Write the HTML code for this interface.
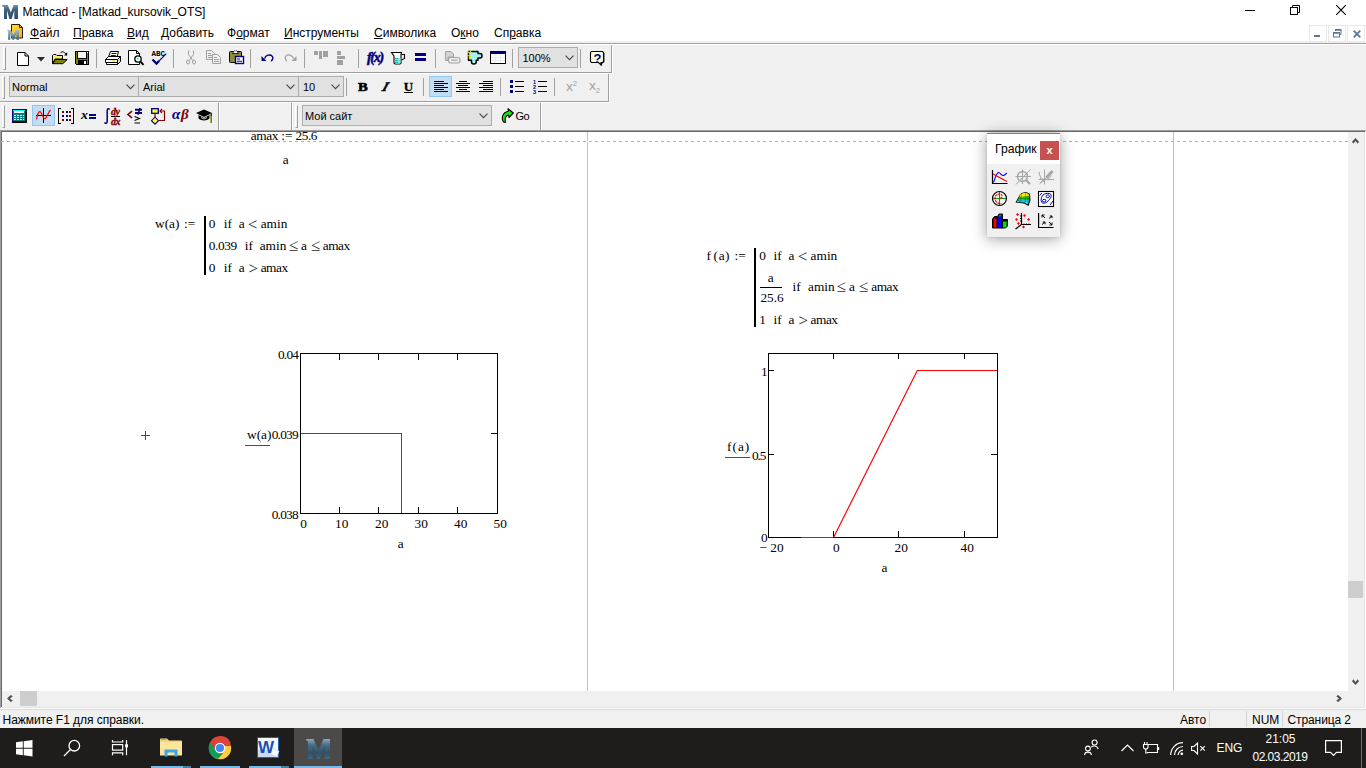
<!DOCTYPE html>
<html lang="ru">
<head>
<meta charset="utf-8">
<title>Mathcad - [Matkad_kursovik_OTS]</title>
<style>
*{box-sizing:border-box;margin:0;padding:0}
html,body{width:1366px;height:768px;overflow:hidden;background:#fff}
body{position:relative;font-family:"Liberation Sans",sans-serif;font-size:12px;color:#000}
.a{position:absolute}
.t{position:absolute;white-space:pre;line-height:1}
.ui{font-family:"Liberation Sans",sans-serif;font-size:12px}
.m{font-family:"Liberation Serif",serif;font-size:13.33px}
u{text-decoration:underline;text-underline-offset:1px}
svg{position:absolute;overflow:visible}
.combo{position:absolute;height:21px;background:#e1e1e1;border:1px solid #adadad}
.grip{position:absolute;width:3px;height:23px;border-left:1px solid #fff;border-top:1px solid #fff;border-right:1px solid #a0a0a0;border-bottom:1px solid #a0a0a0}
.sep{position:absolute;width:1px;height:19px;background:#a0a0a0}
.hl{position:absolute;background:#c2dcf3;border:1px solid #92c6f3}
.ui.c{font-size:11px}
.m.op{font-size:17px;color:#2a2a2a}
.red{background:#f00}
.blk{background:#000}
</style>
</head>
<body>
<!-- ===== TITLE BAR ===== -->
<div class="a" style="left:0;top:0;width:1366px;height:43px;background:#fff"></div>
<svg style="left:2px;top:5px" width="16" height="14" viewBox="0 0 16 14">
 <defs><linearGradient id="mg" x1="0" y1="0" x2="0" y2="1"><stop offset="0" stop-color="#7394aa"/><stop offset="0.350" stop-color="#3d6078"/><stop offset="1" stop-color="#2f5068"/></linearGradient></defs>
 <path d="M0 0H5.800L8.800 7.500L11.600 0H16V14H12.300V5.200L9.700 14H7.400L5 5.600V14H2V2.300L0 0.900Z" fill="url(#mg)"/>
</svg>
<div class="t ui" style="left:22.500px;top:6px;letter-spacing:-0.060px">Mathcad - [Matkad_kursovik_OTS]</div>
<!-- window controls -->
<div class="a blk" style="left:1245px;top:10px;width:10px;height:1px"></div>
<svg style="left:1290px;top:5px" width="10" height="10" viewBox="0 0 10 10" fill="none" stroke="#000" stroke-width="1"><path d="M2.500 2.500V0.500H9.500V7.500H7.500"/><rect x="0.500" y="2.500" width="7" height="7"/></svg>
<svg style="left:1336px;top:5px" width="10" height="10" viewBox="0 0 10 10" fill="none" stroke="#000" stroke-width="1.100"><path d="M0.200 0.200L9.800 9.800M9.800 0.200L0.200 9.800"/></svg>

<!-- ===== MENU BAR ===== -->
<svg style="left:7px;top:24px" width="16" height="16" viewBox="0 0 16 16">
 <defs><linearGradient id="yg" x1="0" y1="0" x2="1" y2="1"><stop offset="0" stop-color="#ffe040"/><stop offset="1" stop-color="#ffae00"/></linearGradient><linearGradient id="mg3" x1="0" y1="0" x2="0" y2="1"><stop offset="0" stop-color="#a9c0cf"/><stop offset="0.500" stop-color="#6f91a7"/><stop offset="1" stop-color="#3f6178"/></linearGradient></defs>
 <path d="M4.500 0.500H12.500L15.500 3.500V14H4.500Z" fill="url(#yg)" stroke="#2a1c00" stroke-width="1"/>
 <path d="M12.500 0.500V3.500H15.500" fill="none" stroke="#2a1c00" stroke-width="1"/>
 <path d="M0 6H3.800L6.300 11L8.700 6H12V15.700H9.400V9.200L7 15.700H5.400L3.300 9.500V15.700H1.200V7.500L0 6.500Z" fill="url(#mg3)"/>
</svg>
<div class="t ui" style="left:30px;top:27px"><u>Ф</u>айл</div>
<div class="t ui" style="left:73px;top:27px"><u>П</u>равка</div>
<div class="t ui" style="left:127px;top:27px"><u>В</u>ид</div>
<div class="t ui" style="left:161px;top:27px"><u>Д</u>обавить</div>
<div class="t ui" style="left:227px;top:27px">Ф<u>о</u>рмат</div>
<div class="t ui" style="left:284px;top:27px"><u>И</u>нструменты</div>
<div class="t ui" style="left:374px;top:27px"><u>С</u>имволика</div>
<div class="t ui" style="left:451px;top:27px">О<u>к</u>но</div>
<div class="t ui" style="left:494px;top:27px">Сп<u>р</u>авка</div>
<!-- MDI child buttons -->
<div class="a" style="left:1309px;top:25px;width:18px;height:17px;border:1px solid #e8e8e8"></div>
<div class="a" style="left:1328px;top:25px;width:18px;height:17px;border:1px solid #e8e8e8"></div>
<div class="a" style="left:1347px;top:25px;width:18px;height:17px;border:1px solid #e8e8e8"></div>
<div class="a" style="left:1314px;top:35px;width:6px;height:2px;background:#5f7693"></div>
<svg style="left:1333px;top:29px" width="9" height="9" viewBox="0 0 9 9" fill="none" stroke="#5f7693"><path d="M2.500 2V1H8V5.500H6.500" stroke-width="1"/><path d="M2 0.750H8.500" stroke-width="1.500"/><rect x="0.500" y="4" width="6" height="4" stroke-width="1"/><path d="M0 3.750H7" stroke-width="1.500"/></svg>
<svg style="left:1353px;top:30px" width="8" height="8" viewBox="0 0 8 8" fill="none" stroke="#5f7693" stroke-width="1.800"><path d="M0.700 0.700L7.300 7.300M7.300 0.700L0.700 7.300"/></svg>
<!-- ===== TOOLBAR AREA ===== -->
<div class="a" style="left:0;top:42px;width:1366px;height:89px;background:#f0f0f0"></div>
<div class="a" style="left:0;top:41px;width:1308px;height:1px;background:#f0f0f0"></div>
<div class="a" style="left:0;top:43px;width:1366px;height:1px;background:#a0a0a0"></div>
<div class="a" style="left:0;top:44px;width:1366px;height:1px;background:#fff"></div>
<!-- toolbar 1 frame -->
<div class="a" style="left:0;top:72px;width:612px;height:1px;background:#a0a0a0"></div>
<div class="a" style="left:0;top:73px;width:613px;height:1px;background:#fff"></div>
<div class="a" style="left:611px;top:45px;width:1px;height:28px;background:#a0a0a0"></div>
<div class="a" style="left:612px;top:45px;width:1px;height:28px;background:#fff"></div>
<div class="grip" style="left:3px;top:47px"></div>
<div class="sep" style="left:96px;top:49px"></div>
<div class="sep" style="left:173px;top:49px"></div>
<div class="sep" style="left:250px;top:49px"></div>
<div class="sep" style="left:304px;top:49px"></div>
<div class="sep" style="left:358px;top:49px"></div>
<div class="sep" style="left:435px;top:49px"></div>
<div class="sep" style="left:512px;top:49px"></div>
<div class="sep" style="left:580px;top:49px"></div>
<!-- new -->
<svg style="left:17px;top:52px" width="12" height="14" viewBox="0 0 12 14"><path d="M0.500 0.500H8L11.500 4V13.500H0.500Z" fill="#fff" stroke="#000"/><path d="M8 0.500V4H11.500" fill="none" stroke="#000"/></svg>
<svg style="left:37px;top:57px" width="8" height="5" viewBox="0 0 8 5"><path d="M0 0H8L4 4.500Z" fill="#2b2b2b"/></svg>
<!-- open -->
<svg style="left:52px;top:51px" width="16" height="14" viewBox="0 0 16 14">
 <path d="M8.300 2.200C9.500 0.200 12 0.300 13.800 3" fill="none" stroke="#000" stroke-width="1"/><path d="M12 4.500H15.200V1.200Z" fill="#000"/>
 <path d="M0.500 12.500V4.500L1.500 3.500H4L5 4.500H10.500V8H3L0.500 12.500Z" fill="#f4f468" stroke="#000"/>
 <path d="M3.500 8.500H15.200L10.800 12.700H0.700Z" fill="#808000" stroke="#000"/>
</svg>
<!-- save -->
<svg style="left:75px;top:51px" width="15" height="15" viewBox="0 0 15 15" shape-rendering="crispEdges">
 <path d="M0 0H14V14H1L0 13Z" fill="#000"/><rect x="1" y="1" width="12" height="12" fill="#808000"/>
 <rect x="3" y="1" width="8" height="6" fill="#f4f4f4"/><rect x="2" y="0" width="1" height="8" fill="#000"/><rect x="11" y="0" width="1" height="8" fill="#000"/><rect x="2" y="7" width="10" height="1" fill="#000"/>
 <rect x="12" y="1" width="1" height="1" fill="#fff"/>
 <rect x="3" y="9" width="9" height="4" fill="#000"/><rect x="9" y="10" width="2" height="3" fill="#fff"/>
</svg>
<!-- print -->
<svg style="left:105px;top:51px" width="17" height="14" viewBox="0 0 17 14">
 <path d="M3.500 6L5.500 0.500H13.500L12 6" fill="#fff" stroke="#000"/>
 <path d="M6.500 2.500H11.500M5.800 4.500H10.800" stroke="#000" stroke-width="0.900"/>
 <path d="M0.500 8.500L3.500 5.500H15.500L12.500 8.500Z" fill="#fff" stroke="#000"/>
 <path d="M12.500 8.500L15.500 5.500V10.500L12.500 13.500Z" fill="#d8d8d8" stroke="#000"/>
 <path d="M0.500 8.500H12.500V11.500H0.500Z" fill="#fff" stroke="#000"/>
 <path d="M1.500 11.500H12.500V13.500H1.500Z" fill="#fff" stroke="#000"/>
 <path d="M7 10H10" stroke="#f0e000" stroke-width="1.200"/>
</svg>
<!-- preview -->
<svg style="left:128px;top:50px" width="17" height="16" viewBox="0 0 17 16">
 <path d="M0.500 0.500H8.500L11.500 3.500V14.500H0.500Z" fill="#fff" stroke="#000"/><path d="M8.500 0.500V3.500H11.500" fill="none" stroke="#000"/>
 <circle cx="10" cy="9" r="3.200" fill="#fff" stroke="#000" stroke-width="1.300"/><path d="M8.500 8.500L10.500 7.500V10.500Z" fill="#00e0e0"/>
 <path d="M12.300 11.300L15.500 14.800" stroke="#000" stroke-width="2"/>
</svg>
<!-- spell -->
<div class="t" style="left:151.500px;top:49.500px;font:bold 7.500px 'Liberation Mono',monospace;letter-spacing:0;color:#000">ABC</div>
<svg style="left:152px;top:53px" width="15" height="12" viewBox="0 0 15 12"><path d="M4.500 10.500L14.300 0.700" fill="none" stroke="#000080" stroke-width="1.100"/><path d="M0.500 6.500L4.500 10.500L7 8" fill="none" stroke="#000080" stroke-width="2.300"/></svg>
<!-- cut (disabled) -->
<svg style="left:186px;top:50px" width="10" height="15" viewBox="0 0 10 15" fill="none" stroke="#a0a0a0"><path d="M2.500 0.500V4.500L6.800 10.500M7.500 0.500V4.500L3.200 10.500" stroke-width="1"/><ellipse cx="2" cy="12" rx="1.500" ry="2"/><ellipse cx="8" cy="12" rx="1.500" ry="2"/></svg>
<!-- copy (disabled) -->
<svg style="left:206px;top:50px" width="16" height="14" viewBox="0 0 16 14" fill="#f0f0f0" stroke="#a0a0a0"><path d="M0.500 0.500H5.500L8.500 3.500V9.500H0.500Z"/><path d="M2 3.500H5M2 5.500H6M2 7.500H6"/><path d="M6.500 4.500H11.500L14.500 7.500V13.500H6.500Z"/><path d="M8 7.500H11M8 9.500H13M8 11.500H13"/></svg>
<!-- paste -->
<svg style="left:229px;top:50px" width="16" height="15" viewBox="0 0 16 15">
 <rect x="0.500" y="1.500" width="12" height="11" rx="1" fill="#8c8c3c" stroke="#000"/>
 <path d="M3.500 3.500H9.500L8 1H5Z" fill="#fff" stroke="#000" stroke-width="0.800"/><path d="M5.500 1.500L6.500 0.500L7.500 1.500Z" fill="#ff0" stroke="#ff0" stroke-width="0.600"/>
 <rect x="6.500" y="6.500" width="8" height="7" fill="#fff" stroke="#000080" stroke-width="1.400"/><path d="M8 9H11M8 11.300H13" stroke="#000080" stroke-width="1.100"/>
</svg>
<!-- undo / redo -->
<svg style="left:261px;top:54px" width="13" height="8" viewBox="0 0 13 8"><path d="M0.500 2V7H5.500Z" fill="#000080"/><path d="M3.500 4.500C5 1 9 0 11 2C12.500 3.500 12 6 10 7" fill="none" stroke="#000080" stroke-width="1.400"/></svg>
<svg style="left:284px;top:54px" width="13" height="8" viewBox="0 0 13 8"><path d="M12.500 2V7H7.500Z" fill="#a0a0a0"/><path d="M9.500 4.500C8 1 4 0 2 2C0.500 3.500 1 6 3 7" fill="none" stroke="#a0a0a0" stroke-width="1.200"/></svg>
<!-- align regions (disabled) -->
<svg style="left:314px;top:51px" width="15" height="9" viewBox="0 0 15 9" fill="#a0a0a0" shape-rendering="crispEdges"><rect x="0" y="0" width="4" height="4"/><rect x="5" y="0" width="3" height="8"/><rect x="9" y="0" width="5" height="6"/></svg>
<svg style="left:337px;top:51px" width="9" height="14" viewBox="0 0 9 14" fill="#a0a0a0" shape-rendering="crispEdges"><rect x="0" y="0" width="4" height="4"/><rect x="0" y="5" width="8" height="3"/><rect x="0" y="9" width="6" height="5"/></svg>
<!-- f(x) -->
<div class="t" style="left:367px;top:50px;font:italic bold 14px 'Liberation Serif',serif;letter-spacing:-1.300px;color:#000080;-webkit-text-stroke:0.500px #000080">f(x)</div>
<!-- units jug -->
<svg style="left:391px;top:52px" width="15" height="13" viewBox="0 0 15 13">
 <path d="M0.500 0.500H10.500L10 2.500V11L9 12H4L3 11V4Z" fill="#fff" stroke="#000" stroke-width="1.100"/>
 <path d="M10.500 2.500H13.500V6.500L10.500 8" fill="none" stroke="#000" stroke-width="1.100"/>
 <rect x="4" y="6" width="5.500" height="5.500" fill="#7fe8e8"/><path d="M4 6.500H7M4 8.500H7M4 10.500H7" stroke="#00a0a0" stroke-width="0.800"/>
</svg>
<!-- equals -->
<div class="a" style="left:415px;top:53px;width:11px;height:3px;background:#000080"></div>
<div class="a" style="left:415px;top:58px;width:11px;height:3px;background:#000080"></div>
<!-- hyperlink (disabled) -->
<svg style="left:445px;top:51px" width="16" height="13" viewBox="0 0 16 13" fill="none" stroke="#a0a0a0"><path d="M0.500 0.500H6L8.500 3V6H3V9.500H0.500Z" fill="#d4d4d4"/><rect x="3.500" y="6.500" width="11.500" height="5.500" rx="2.200" fill="#f0f0f0" stroke-width="1.100"/><rect x="6" y="8.300" width="6.500" height="1.800" fill="#b8b8b8" stroke="none"/></svg>
<!-- component puzzle -->
<svg style="left:467px;top:50px" width="16" height="15" viewBox="0 0 16 15">
 <path d="M1.500 1.500H11V3.500H13C15.700 3.500 15.700 8 13 8H11V10.200H9.200V12C9.200 14.600 4.500 14.600 4.500 12V10.200H1.500Z" fill="#a4f2f2" stroke="#000" stroke-width="1.500" stroke-linejoin="round"/>
 <path d="M0.500 1.500L3.500 4M0.800 5.500L4 6.500M3 0.500L4.800 3.500M1.500 8L4.500 7.800" stroke="#f8ec00" stroke-width="1.100"/>
</svg>
<!-- table -->
<svg style="left:490px;top:51px" width="17" height="14" viewBox="0 0 17 14" shape-rendering="crispEdges"><rect x="0.500" y="0.500" width="15" height="12" fill="#fff" stroke="#000"/><rect x="1" y="1" width="14" height="2" fill="#000080"/><rect x="0" y="12" width="16" height="1" fill="#000"/><path d="M1 6.500H15M1 9.500H15M5.500 3V12M10.500 3V12" stroke="#ececec"/></svg>
<!-- zoom combo -->
<div class="combo" style="left:518px;top:47px;width:60px"></div>
<div class="t ui c" style="left:522.500px;top:53px">100%</div>
<svg style="left:565px;top:55px" width="9" height="6" viewBox="0 0 9 6"><path d="M0.500 0.700L4.500 4.700L8.500 0.700" fill="none" stroke="#444" stroke-width="1.100"/></svg>
<!-- help -->
<svg style="left:590px;top:51px" width="15" height="15" viewBox="0 0 15 15"><path d="M1.500 0.500H12.500L13.500 1.500V10.500L12.500 11.500H11V14L8.500 11.500H1.500L0.500 10.500V1.500Z" fill="#fffde0" stroke="#000" stroke-width="1.100"/><path d="M13.900 2V11L12.700 12H11.500V14.500" fill="none" stroke="#000" stroke-width="1"/></svg>
<div class="t" style="left:593.500px;top:51px;font:bold 13px 'Liberation Sans',sans-serif;color:#000080">?</div>
<!-- ===== TOOLBAR 2 (formatting) ===== -->
<div class="a" style="left:0;top:101px;width:609px;height:1px;background:#a0a0a0"></div>
<div class="a" style="left:0;top:102px;width:610px;height:1px;background:#fff"></div>
<div class="a" style="left:608px;top:74px;width:1px;height:28px;background:#a0a0a0"></div>
<div class="a" style="left:609px;top:74px;width:1px;height:28px;background:#fff"></div>
<div class="grip" style="left:2px;top:76px"></div>
<div class="combo" style="left:9px;top:76px;width:130px"></div>
<div class="combo" style="left:138px;top:76px;width:162px"></div>
<div class="combo" style="left:298px;top:76px;width:46px"></div>
<div class="t ui c" style="left:12px;top:82px">Normal</div>
<div class="t ui c" style="left:143px;top:82px">Arial</div>
<div class="t ui c" style="left:303px;top:82px">10</div>
<svg style="left:126px;top:84px" width="9" height="6" viewBox="0 0 9 6"><path d="M0.500 0.700L4.500 4.700L8.500 0.700" fill="none" stroke="#444" stroke-width="1.100"/></svg>
<svg style="left:286px;top:84px" width="9" height="6" viewBox="0 0 9 6"><path d="M0.500 0.700L4.500 4.700L8.500 0.700" fill="none" stroke="#444" stroke-width="1.100"/></svg>
<svg style="left:331px;top:84px" width="9" height="6" viewBox="0 0 9 6"><path d="M0.500 0.700L4.500 4.700L8.500 0.700" fill="none" stroke="#444" stroke-width="1.100"/></svg>
<div class="sep" style="left:346px;top:78px;height:18px"></div>
<div class="sep" style="left:423px;top:78px;height:18px"></div>
<div class="sep" style="left:500px;top:78px;height:18px"></div>
<div class="sep" style="left:554px;top:78px;height:18px"></div>
<div class="t" style="left:357.500px;top:79px;font:bold 13px 'Liberation Serif',serif;-webkit-text-stroke:0.600px #000;transform:scaleX(1.120);transform-origin:left">B</div>
<div class="t" style="left:383px;top:79px;font:italic bold 13px 'Liberation Serif',serif;-webkit-text-stroke:0.500px #000;transform:skewX(-20deg)">I</div>
<div class="t" style="left:403.800px;top:79px;font:bold 13px 'Liberation Serif',serif;-webkit-text-stroke:0.300px #000">U</div>
<div class="a blk" style="left:404px;top:92px;width:9px;height:1px"></div>
<div class="hl" style="left:429px;top:76px;width:23px;height:21px"></div>
<svg style="left:434px;top:81px" width="15" height="11" viewBox="0 0 15 11" shape-rendering="crispEdges" fill="#000"><rect x="0" y="0" width="10" height="1"/><rect x="0" y="2" width="14" height="1"/><rect x="0" y="4" width="10" height="1"/><rect x="0" y="6" width="14" height="1"/><rect x="0" y="8" width="10" height="1"/><rect x="0" y="10" width="14" height="1"/></svg>
<svg style="left:456px;top:81px" width="15" height="11" viewBox="0 0 15 11" shape-rendering="crispEdges" fill="#000"><rect x="3" y="0" width="8" height="1"/><rect x="0" y="2" width="14" height="1"/><rect x="2" y="4" width="10" height="1"/><rect x="0" y="6" width="14" height="1"/><rect x="3" y="8" width="8" height="1"/><rect x="0" y="10" width="14" height="1"/></svg>
<svg style="left:479px;top:81px" width="15" height="11" viewBox="0 0 15 11" shape-rendering="crispEdges" fill="#000"><rect x="4" y="0" width="10" height="1"/><rect x="0" y="2" width="14" height="1"/><rect x="4" y="4" width="10" height="1"/><rect x="0" y="6" width="14" height="1"/><rect x="4" y="8" width="10" height="1"/><rect x="0" y="10" width="14" height="1"/></svg>
<!-- bullets -->
<svg style="left:510px;top:80px" width="15" height="13" viewBox="0 0 15 13" shape-rendering="crispEdges"><g fill="#000080"><rect x="0" y="0" width="3" height="3"/><rect x="0" y="5" width="3" height="3"/><rect x="0" y="10" width="3" height="3"/></g><g fill="#000"><rect x="5" y="1" width="9" height="1"/><rect x="5" y="6" width="9" height="1"/><rect x="5" y="11" width="9" height="1"/></g></svg>
<div class="t" style="left:533px;top:79.500px;font:bold 5.500px/5px 'Liberation Sans',sans-serif;color:#000080">1<br>2<br>3</div>
<svg style="left:538px;top:80px" width="10" height="13" viewBox="0 0 10 13" shape-rendering="crispEdges" fill="#000"><rect x="0" y="1" width="9" height="1"/><rect x="0" y="6" width="9" height="1"/><rect x="0" y="11" width="9" height="1"/></svg>
<!-- super/sub (disabled) -->
<div class="t" style="left:566px;top:80px;font:12px 'Liberation Sans',sans-serif;color:#a0a0a0;transform:scaleX(1.150);transform-origin:left">x</div>
<div class="t" style="left:573px;top:80px;font:7px 'Liberation Sans',sans-serif;color:#a0a0a0">2</div>
<div class="t" style="left:589px;top:79px;font:12px 'Liberation Sans',sans-serif;color:#a0a0a0;transform:scaleX(1.150);transform-origin:left">x</div>
<div class="t" style="left:596px;top:87px;font:7px 'Liberation Sans',sans-serif;color:#a0a0a0">2</div>
<!-- ===== TOOLBAR 3 (math + resources) ===== -->
<div class="a" style="left:218px;top:103px;width:1px;height:27px;background:#a0a0a0"></div>
<div class="a" style="left:219px;top:103px;width:1px;height:27px;background:#fff"></div>
<div class="a" style="left:291px;top:103px;width:1px;height:27px;background:#a0a0a0"></div>
<div class="a" style="left:292px;top:103px;width:1px;height:27px;background:#fff"></div>
<div class="a" style="left:540px;top:103px;width:1px;height:27px;background:#a0a0a0"></div>
<div class="a" style="left:541px;top:103px;width:1px;height:27px;background:#fff"></div>
<div class="grip" style="left:2px;top:105px"></div>
<div class="grip" style="left:295px;top:105px"></div>
<!-- calculator -->
<svg style="left:12px;top:109px" width="16" height="15" viewBox="0 0 16 15" shape-rendering="crispEdges">
 <rect x="0" y="0" width="15" height="14" rx="1" fill="#000"/><rect x="0" y="0" width="14" height="13" fill="#000080"/><rect x="1" y="1" width="12" height="11" fill="#008080"/>
 <rect x="2" y="2" width="10" height="2" fill="#fff"/><rect x="1" y="1" width="12" height="1" fill="#00ffff"/>
 <g fill="#fff"><rect x="2" y="6" width="2" height="1"/><rect x="5" y="6" width="2" height="1"/><rect x="8" y="6" width="2" height="1"/><rect x="11" y="6" width="1" height="1"/><rect x="2" y="8" width="2" height="1"/><rect x="5" y="8" width="2" height="1"/><rect x="8" y="8" width="2" height="1"/><rect x="11" y="8" width="1" height="1"/><rect x="2" y="10" width="2" height="1"/><rect x="5" y="10" width="2" height="1"/><rect x="8" y="10" width="2" height="1"/><rect x="11" y="10" width="1" height="1"/></g>
</svg>
<!-- graph (active) -->
<div class="hl" style="left:32px;top:105px;width:23px;height:21px"></div>
<svg style="left:35px;top:108px" width="17" height="15" viewBox="0 0 17 15" fill="none"><path d="M8.500 0V15M1 7.500H16" stroke="#000" stroke-width="1"/><path d="M1.500 11.500C3 3 5 2 6.500 5.500C8 9 9.500 13 11.500 9C13 6 14 3.500 15.500 2" stroke="#f00" stroke-width="1.200"/></svg>
<!-- matrix -->
<svg style="left:58px;top:108px" width="17" height="16" viewBox="0 0 17 16" shape-rendering="crispEdges"><path d="M3 0.500H0.500V15.500H3M13 0.500H15.500V15.500H13" fill="none" stroke="#000"/><g fill="#800000"><rect x="4" y="3" width="2" height="2"/><rect x="11" y="3" width="2" height="2"/><rect x="4" y="11" width="2" height="2"/><rect x="11" y="11" width="2" height="2"/><rect x="11" y="7" width="2" height="2"/></g><g fill="#000080"><rect x="7.500" y="3" width="2" height="2"/><rect x="4" y="7" width="2" height="2"/><rect x="7.500" y="7" width="2" height="2"/><rect x="7.500" y="11" width="2" height="2"/></g></svg>
<!-- x= -->
<div class="t" style="left:81px;top:108px;font:italic bold 12px 'Liberation Serif',serif;color:#000;transform:scaleX(1.150);transform-origin:left">x</div>
<div class="a" style="left:89px;top:114px;width:7px;height:2px;background:#000080"></div>
<div class="a" style="left:89px;top:117px;width:7px;height:2px;background:#000080"></div>
<!-- calculus -->
<svg style="left:104px;top:108px" width="17" height="16" viewBox="0 0 17 16" fill="none"><path d="M5.800 1.300C4 0 3.200 1 3.200 3V13C3.200 15 2.200 16 0.400 14.700" stroke="#000080" stroke-width="1.500"/><path d="M7 8.500H16" stroke="#000" stroke-width="1"/></svg>
<div class="t" style="left:111px;top:106px;font:italic bold 10px 'Liberation Serif',serif;color:#800000;letter-spacing:-0.400px;-webkit-text-stroke:0.300px #800000">dy</div>
<div class="t" style="left:111px;top:115.500px;font:italic bold 10px 'Liberation Serif',serif;color:#800000;letter-spacing:-0.400px;-webkit-text-stroke:0.300px #800000">dx</div>
<!-- boolean -->
<svg style="left:127px;top:108px" width="16" height="16" viewBox="0 0 16 16" fill="none"><path d="M5 3.200L1 6.500L5 9.800" stroke="#800000" stroke-width="1.600"/><path d="M8 1.700H15M8 5H15" stroke="#000080" stroke-width="2"/><path d="M13 0L11 6.800" stroke="#000080" stroke-width="1.500"/><path d="M7.500 8.500L12.500 10.500L7.500 12.500M7.500 15H13" stroke="#000" stroke-width="1.100"/></svg>
<!-- programming -->
<svg style="left:151px;top:108px" width="15" height="17" viewBox="0 0 15 17" fill="none"><rect x="0.700" y="0.700" width="6.600" height="4.600" fill="#ffff40" stroke="#000080" stroke-width="1.300"/><path d="M4 9.200L7.500 12.700L4 16.200L0.500 12.700Z" fill="#ffff40" stroke="#000080" stroke-width="1.100"/><path d="M4 5.500V9" stroke="#800000" stroke-width="1.200"/><path d="M7.500 12.500H13.500V3H9.500" stroke="#800000" stroke-width="1.200"/><path d="M11 1L9 3L11 5" stroke="#800000" stroke-width="1.100"/></svg>
<!-- greek -->
<div class="t" style="left:172px;top:106px;font:italic bold 15px 'Liberation Serif',serif;color:#000080">α</div>
<div class="t" style="left:181px;top:106px;font:italic bold 15px 'Liberation Serif',serif;color:#800000">β</div>
<!-- grad cap -->
<svg style="left:196px;top:109px" width="17" height="15" viewBox="0 0 17 15"><path d="M0 4L8 0.500L16 4L8 8Z" fill="#000"/><path d="M2.500 6V9.500C5 12 11 12 13.500 9.500V6L8 9Z" fill="#000"/><path d="M5 8.500L8 10L11 8.500" stroke="#fff" fill="none" stroke-width="0.800"/><path d="M15.200 4V14" stroke="#808000" stroke-width="1.600"/><path d="M15.200 4V7" stroke="#000080" stroke-width="1"/></svg>
<!-- resources combo -->
<div class="combo" style="left:302px;top:105px;width:190px"></div>
<div class="t ui c" style="left:305px;top:111px">Мой сайт</div>
<svg style="left:479px;top:113px" width="9" height="6" viewBox="0 0 9 6"><path d="M0.500 0.700L4.500 4.700L8.500 0.700" fill="none" stroke="#444" stroke-width="1.100"/></svg>
<!-- Go -->
<svg style="left:501px;top:108px" width="13" height="16" viewBox="0 0 13 16"><path d="M7 0.700L12.300 5L8 9.500L7.500 7C5 7.500 3.500 10 4.500 14.500L2.500 14C0 10 1.500 4.500 7.300 3.300Z" fill="#18e018" stroke="#000" stroke-width="1.100" stroke-linejoin="round"/></svg>
<div class="t ui c" style="left:515.500px;top:111px;letter-spacing:-0.500px">Go</div>
<!-- bottom edge of toolbar area -->
<div class="a" style="left:0;top:130px;width:1366px;height:1px;background:#a0a0a0"></div>
<div class="a" style="left:1px;top:131px;width:1364px;height:1px;background:#696969"></div>
<!-- ===== DOCUMENT ===== -->
<div class="a" style="left:0;top:131px;width:1px;height:577px;background:#a0a0a0"></div>
<div class="a" style="left:1px;top:131px;width:1px;height:576px;background:#696969"></div>
<div class="a" id="doc" style="left:2px;top:132px;width:1346px;height:559px;background:#fff"></div>
<!-- page break dashed line + margins -->
<div class="a" style="left:1px;top:141px;width:1347px;height:1px;background:repeating-linear-gradient(90deg,#b4b4b4 0,#b4b4b4 3px,transparent 3px,transparent 6px)"></div>
<div class="a" style="left:587px;top:132px;width:1px;height:559px;background:#c0c0c0"></div>
<div class="a" style="left:1173px;top:132px;width:1px;height:559px;background:#c0c0c0"></div>
<div class="a" style="left:587px;top:141px;width:1px;height:1px;background:#fff"></div>

<!-- top fragments -->
<div class="a" style="left:240px;top:132px;width:90px;height:9px;overflow:hidden"><div class="t m" style="left:10.700px;top:-3px;letter-spacing:-0.400px">amax</div><div class="t m" style="left:41.300px;top:-3px">:=</div><div class="t m" style="left:55.600px;top:-3px;letter-spacing:-0.500px">25.6</div></div>
<div class="t m" style="left:282.700px;top:153px">a</div>

<!-- w(a) definition -->
<div class="t m" style="left:155px;top:217px">w(a)</div>
<div class="t m" style="left:184px;top:217px">:=</div>
<div class="a blk" style="left:204px;top:216px;width:2px;height:59px"></div>
<div class="t m" style="left:208.7px;top:217px">0</div>
<div class="t m" style="left:223.8px;top:217px">if</div>
<div class="t m" style="left:238.7px;top:217px">a</div>
<div class="t m op" style="left:247.8px;top:216px">&lt;</div>
<div class="t m" style="left:260.7px;top:217px">amin</div>
<div class="t m" style="left:208.7px;top:239px;letter-spacing:-0.350px">0.039</div>
<div class="t m" style="left:244.8px;top:239px">if</div>
<div class="t m" style="left:259.7px;top:239px">amin</div>
<div class="t m op" style="left:288.8px;top:237px">≤</div>
<div class="t m" style="left:301px;top:239px">a</div>
<div class="t m op" style="left:310.8px;top:237px">≤</div>
<div class="t m" style="left:322.8px;top:239px;letter-spacing:-0.500px">amax</div>
<div class="t m" style="left:208.7px;top:261px">0</div>
<div class="t m" style="left:223.8px;top:261px">if</div>
<div class="t m" style="left:238.7px;top:261px">a</div>
<div class="t m op" style="left:248.4px;top:260px">&gt;</div>
<div class="t m" style="left:260.7px;top:261px;letter-spacing:-0.500px">amax</div>

<!-- crosshair -->
<div class="a red" style="left:141px;top:435px;width:9px;height:1px"></div>
<div class="a red" style="left:145px;top:431px;width:1px;height:9px"></div>

<!-- left plot -->
<svg style="left:0;top:0" width="1366" height="768" viewBox="0 0 1366 768" shape-rendering="crispEdges" fill="none">
 <rect x="300.500" y="353.500" width="197" height="160" stroke="#000"/>
 <path d="M339.500 507V513M378.500 507V513M418.500 507V513M457.500 507V513M339.500 354V360M378.500 354V360M418.500 354V360M457.500 354V360M491 433.500H497" stroke="#000"/>
 <path d="M301 433.500H401.500V513" stroke="#f00"/>
 <path d="M245 445.500H270" stroke="#f00"/>
 <!-- right plot -->
 <rect x="768.500" y="353.500" width="229" height="184" stroke="#000"/>
 <path d="M833.500 531V537M898.500 531V537M964.500 531V537M833.500 354V359M898.500 354V359M964.500 354V359M769 370.500H774M769 454.500H774M991 370.500H997M991 454.500H997" stroke="#000"/>
 <path d="M725 457.500H750" stroke="#f00"/>
 <path d="M801 537.500H833" stroke="#f00"/>
</svg>
<svg style="left:0;top:0" width="1366" height="768" viewBox="0 0 1366 768" fill="none"><path d="M833.500 537.500L917.300 370.500H997" stroke="#f00" stroke-width="1.200"/></svg>
<div class="t m" style="left:277.900px;top:348px;letter-spacing:-0.750px">0.04</div>
<div class="t m" style="left:247px;top:428px">w(a)</div>
<div class="t m" style="left:271.700px;top:428px;letter-spacing:-0.750px">0.039</div>
<div class="t m" style="left:271.700px;top:508px;letter-spacing:-0.750px">0.038</div>
<div class="t m" style="left:300.300px;top:517px">0</div>
<div class="t m" style="left:335px;top:517px">10</div>
<div class="t m" style="left:375px;top:517px">20</div>
<div class="t m" style="left:414.600px;top:517px">30</div>
<div class="t m" style="left:454px;top:517px">40</div>
<div class="t m" style="left:493.500px;top:517px">50</div>
<div class="t m" style="left:397.700px;top:537px">a</div>

<!-- f(a) definition -->
<div class="t m" style="left:706.5px;top:249px">f</div>
<div class="t m" style="left:713.5px;top:249px">(</div>
<div class="t m" style="left:718.8px;top:249px">a</div>
<div class="t m" style="left:725px;top:249px">)</div>
<div class="t m" style="left:734.5px;top:249px">:=</div>
<div class="a blk" style="left:754px;top:248px;width:2px;height:79px"></div>
<div class="t m" style="left:759.2px;top:249px">0</div>
<div class="t m" style="left:773.6px;top:249px">if</div>
<div class="t m" style="left:788.6px;top:249px">a</div>
<div class="t m op" style="left:797.8px;top:248px">&lt;</div>
<div class="t m" style="left:810.6px;top:249px">amin</div>
<div class="t m" style="left:767.8px;top:271px">a</div>
<div class="a blk" style="left:760px;top:287px;width:22px;height:1px"></div>
<div class="t m" style="left:760.4px;top:291px">25.6</div>
<div class="t m" style="left:792.6px;top:280px">if</div>
<div class="t m" style="left:808px;top:280px">amin</div>
<div class="t m op" style="left:836.5px;top:278px">≤</div>
<div class="t m" style="left:849.1px;top:280px">a</div>
<div class="t m op" style="left:858.8px;top:278px">≤</div>
<div class="t m" style="left:871.3px;top:280px;letter-spacing:-0.500px">amax</div>
<div class="t m" style="left:759.2px;top:313px">1</div>
<div class="t m" style="left:773.6px;top:313px">if</div>
<div class="t m" style="left:788.6px;top:313px">a</div>
<div class="t m op" style="left:798.4px;top:312px">&gt;</div>
<div class="t m" style="left:810.6px;top:313px;letter-spacing:-0.500px">amax</div>

<!-- right plot labels -->
<div class="t m" style="left:761px;top:365px">1</div>
<div class="t m" style="left:727px;top:440px;letter-spacing:1px">f(a)</div>
<div class="t m" style="left:752px;top:449px;letter-spacing:-1.100px">0.5</div>
<div class="t m" style="left:761px;top:531px">0</div>
<div class="t m" style="left:759.500px;top:541px">− 20</div>
<div class="t m" style="left:833px;top:541px">0</div>
<div class="t m" style="left:894.600px;top:541px">20</div>
<div class="t m" style="left:960.600px;top:541px">40</div>
<div class="t m" style="left:881.500px;top:561px">a</div>
<!-- ===== GRAPH PALETTE ===== -->
<div class="a" style="left:987px;top:133px;width:73px;height:104px;background:#f0f0f0;box-shadow:0 2px 14px rgba(0,0,0,0.380),0 0 2px rgba(0,0,0,0.140)"></div>
<div class="a" style="left:987px;top:133px;width:73px;height:31px;background:#fff;border-top:1px solid #3c8ae0"></div>
<div class="t ui" style="left:995px;top:143px;font-size:12.200px">График</div>
<div class="a" style="left:1040px;top:141px;width:19px;height:19px;background:#c75050"></div>
<div class="t" style="left:1046.500px;top:144px;font:bold 11px 'Liberation Sans',sans-serif;color:#fff">x</div>
<!-- row 1 -->
<svg style="left:992px;top:170px" width="16" height="15" viewBox="0 0 16 15" fill="none"><path d="M0.500 0V13.500H15.500" stroke="#000" stroke-width="1.200"/><path d="M1.500 12.500C3 9 4 3 6.500 2.500C8.500 2.500 9.500 6 11.500 5.500C13 5 14 3.500 15 3" stroke="#0000ff" stroke-width="1.100"/><path d="M1 4L15 11.500" stroke="#f00" stroke-width="1.100"/></svg>
<svg style="left:1015px;top:169px" width="17" height="16" viewBox="0 0 17 16" fill="none" stroke="#a6a6a6"><circle cx="7.500" cy="7.500" r="5" stroke-width="1.500"/><path d="M7.500 0.500V15M0.500 7.500H16" stroke-width="1.100"/><path d="M15.500 0.500L1 15.500" stroke-width="1"/><path d="M10.500 10.500L15 15" stroke-width="2.200"/></svg>
<svg style="left:1038px;top:169px" width="17" height="16" viewBox="0 0 17 16" fill="none" stroke="#a6a6a6"><path d="M6.500 0.500V15.500M0.500 10.500H16" stroke-width="1"/><path d="M1 3C2 12 9 13 13.500 6.500" stroke-width="1"/><path d="M1.500 15L9.500 7.500" stroke-width="1"/><path d="M8.500 8.500L14.500 2" stroke-width="3"/><path d="M2 9L7 14M7 9L2 14" stroke-width="0.900"/></svg>
<!-- row 2 -->
<svg style="left:992px;top:191px" width="16" height="16" viewBox="0 0 16 16" fill="none"><circle cx="7.500" cy="7.500" r="7" fill="#f4f4f4" stroke="#000" stroke-width="1.200"/><path d="M7.500 1V14M1 7.500H14" stroke="#00a000" stroke-width="1.100"/><path d="M8 7.500C10.500 7 11 3.500 8 3C3 2.500 1.500 8 4.500 11C6 12.500 8 13 9.500 12.500" stroke="#f00" stroke-width="1.100" stroke-dasharray="2.500 0.700"/></svg>
<svg style="left:1015px;top:191px" width="17" height="16" viewBox="0 0 17 16"><path d="M0.500 11.500L5 3.500C7 1 12 0.500 15 3L15.500 9L13.500 15L9 12.500Z" fill="#000"/><path d="M5.500 3.500C7.500 1.800 11.500 1.500 14.200 3.300L14.400 5.500L4.300 6Z" fill="#f4f400"/><path d="M4.300 6L14.400 5.500L14.500 8.800L2.600 9.200Z" fill="#20d020"/><path d="M2.600 9.200L14.500 8.800L12.800 13.500L9.200 11.500L1.800 11Z" fill="#20e8f0"/><path d="M7 2L5 11M10.500 1.800L10 12M13 2.500L13 13M3.500 7.300H14.500M2.500 10H14" stroke="#000" stroke-width="0.500" fill="none" opacity="0.550"/></svg>
<svg style="left:1038px;top:191px" width="17" height="16" viewBox="0 0 17 16" fill="none"><rect x="0.500" y="0.500" width="15" height="15" fill="#fff" stroke="#000" stroke-width="1.100"/><path d="M5 4C7 2 12 1.800 13 3.500C14 5.500 12 8 10 10C8 12.500 4.500 13 3.500 11C2.500 9 3.500 5.500 5 4Z" stroke="#0000c8" stroke-width="1"/><ellipse cx="9.800" cy="5.300" rx="1.700" ry="1.400" stroke="#0000c8" stroke-width="1"/><ellipse cx="6.200" cy="9.700" rx="1.700" ry="1.400" stroke="#0000c8" stroke-width="1"/><path d="M1.500 4.500L4 2M12 14L15 10" stroke="#0000c8" stroke-width="1"/></svg>
<!-- row 3 -->
<svg style="left:992px;top:213px" width="17" height="16" viewBox="0 0 17 16"><path d="M0.500 15V6L2.500 3.500H5.500L7 1H10.500V6.500H15.500V13L13.500 15Z" fill="#000" stroke="#000" stroke-width="1"/><rect x="1.500" y="6" width="3" height="8.500" fill="#f00"/><path d="M1.500 6L3 4H5L4.500 6Z" fill="#800000"/><rect x="6" y="3.500" width="3" height="11" fill="#0000ff"/><path d="M6 3.500L7.500 1.500H10L9 3.500Z" fill="#008080"/><rect x="11" y="8.500" width="3" height="6" fill="#00e000"/><path d="M14 8.500L15.300 7.200V12.800L14 14.500Z" fill="#008000"/></svg>
<svg style="left:1015px;top:213px" width="17" height="16" viewBox="0 0 17 16" fill="none"><path d="M6.500 0V11.500L0.500 16M6.500 11.500H16" stroke="#000" stroke-width="1.200"/><path d="M6.500 3H5M6.500 5.500H5M6.500 8H5M9 11.500V10.500M11.500 11.500V10.500M14 11.500V10.500" stroke="#000" stroke-width="0.900"/><g fill="#f00"><path d="M2.500 0L4 1.500L2.500 3L1 1.500Z"/><path d="M9.500 1L11 2.500L9.500 4L8 2.500Z"/><path d="M1.500 5L3 6.500L1.500 8L0 6.500Z"/><path d="M13.500 5L15 6.500L13.500 8L12 6.500Z"/><path d="M3.500 9L5 10.500L3.500 12L2 10.500Z"/><path d="M8.500 12.500L10 14L8.500 15.500L7 14Z"/></g></svg>
<svg style="left:1038px;top:213px" width="17" height="16" viewBox="0 0 17 16" fill="none" stroke="#000"><path d="M0.600 0V14.500H15.500" stroke-width="1.200"/><path d="M7 5L4 2M4 2H6.500M4 2V4.500" stroke-width="1"/><path d="M11 5.500L14 3M14 3H11.800M14 3V5.200" stroke-width="1"/><path d="M4 11.500L7 9M7 9H4.800M7 9V11.200" stroke-width="1"/><path d="M11 9L14 12M14 12H11.500M14 12V9.500" stroke-width="1"/></svg>
<!-- ===== SCROLLBARS ===== -->
<div class="a" style="left:1348px;top:132px;width:16px;height:559px;background:#f0f0f0"></div>
<div class="a" style="left:1348px;top:581px;width:15px;height:17px;background:#cdcdcd"></div>
<svg style="left:1352px;top:138px" width="7" height="6" viewBox="0 0 7 6"><path d="M3.500 0L7 3.800L5.700 5.800L3.500 3L1.300 5.800L0 3.800Z" fill="#505050"/></svg>
<svg style="left:1352px;top:679px" width="7" height="6" viewBox="0 0 7 6"><path d="M3.500 6L7 2.200L5.700 0.200L3.500 3L1.300 0.200L0 2.200Z" fill="#505050"/></svg>
<div class="a" style="left:2px;top:691px;width:1362px;height:16px;background:#f0f0f0"></div>
<div class="a" style="left:20px;top:691px;width:17px;height:15px;background:#cdcdcd"></div>
<svg style="left:7px;top:695px" width="6" height="7" viewBox="0 0 6 7"><path d="M0 3.500L3.800 0L5.800 1.300L3 3.500L5.800 5.700L3.800 7Z" fill="#505050"/></svg>
<svg style="left:1336px;top:695px" width="6" height="7" viewBox="0 0 6 7"><path d="M6 3.500L2.200 0L0.200 1.300L3 3.500L0.200 5.700L2.200 7Z" fill="#505050"/></svg>
<!-- ===== STATUS BAR ===== -->
<div class="a" style="left:0;top:708px;width:1366px;height:20px;background:#f0f0f0"></div>
<div class="a" style="left:2px;top:707px;width:1364px;height:1px;background:#e3e3e3"></div>
<div class="a" style="left:0;top:708px;width:1366px;height:1px;background:#fff"></div>
<div class="a" style="left:0;top:709px;width:1366px;height:1px;background:#d9d9d9"></div>
<div class="a" style="left:1364px;top:132px;width:1px;height:576px;background:#e3e3e3"></div>
<div class="a" style="left:1365px;top:131px;width:1px;height:578px;background:#fff"></div>
<div class="t ui" style="left:2.500px;top:714px;letter-spacing:-0.040px">Нажмите F1 для справки.</div>
<div class="t ui" style="left:1180px;top:714px">Авто</div>
<div class="t ui" style="left:1252px;top:714px">NUM</div>
<div class="t ui" style="left:1287.500px;top:714px;letter-spacing:-0.100px">Страница 2</div>
<div class="a" style="left:1209px;top:711px;width:1px;height:16px;background:#d4d4d4"></div>
<div class="a" style="left:1246px;top:711px;width:1px;height:16px;background:#d4d4d4"></div>
<div class="a" style="left:1282px;top:711px;width:1px;height:16px;background:#d4d4d4"></div>
<!-- ===== TASKBAR ===== -->
<div class="a" style="left:0;top:728px;width:1366px;height:40px;background:#1e1d1b"></div>
<div class="a" style="left:294px;top:728px;width:48px;height:40px;background:#4b4a48"></div>
<div class="a" style="left:151px;top:766px;width:40px;height:2px;background:#76b9ed"></div>
<div class="a" style="left:183px;top:766px;width:8px;height:2px;background:#4f7da0"></div>
<div class="a" style="left:200px;top:766px;width:40px;height:2px;background:#76b9ed"></div>
<div class="a" style="left:249px;top:766px;width:40px;height:2px;background:#76b9ed"></div>
<div class="a" style="left:281px;top:766px;width:8px;height:2px;background:#4f7da0"></div>
<div class="a" style="left:294px;top:766px;width:48px;height:2px;background:#76b9ed"></div>
<!-- start -->
<svg style="left:16px;top:740px" width="17" height="17" viewBox="0 0 17 17" fill="#fff"><path d="M0 2.300L6.800 1.300V7.800H0ZM7.700 1.200L16.500 0V7.800H7.700ZM0 8.700H6.800V15.200L0 14.200ZM7.700 8.700H16.500V16.500L7.700 15.300Z"/></svg>
<!-- search -->
<svg style="left:62px;top:738px" width="20" height="20" viewBox="0 0 20 20" fill="none" stroke="#fff" stroke-width="1.300"><circle cx="12.300" cy="7.700" r="5.300"/><path d="M8.500 11.500L2 18"/></svg>
<!-- task view -->
<svg style="left:111px;top:739px" width="18" height="18" viewBox="0 0 18 18" fill="none" stroke="#fff" stroke-width="1.200"><rect x="1.500" y="5.600" width="10.200" height="5.500"/><path d="M1.500 1V3H11.700V1M1.500 16.200V13.900H11.700V16.200"/><path d="M15.500 1V16.200" stroke-width="1.200"/><rect x="14.100" y="5.300" width="2.900" height="3" fill="#fff" stroke="none"/></svg>
<!-- explorer -->
<svg style="left:160px;top:738px" width="22" height="19" viewBox="0 0 22 19"><path d="M0 1.500C0 0.700 0.500 0.500 1 0.500H7L9 2.500H21C21.600 2.500 22 3 22 3.500V17H0Z" fill="#f5d67b"/><path d="M0 4H22V17.500H0Z" fill="#fde59b"/><path d="M1 1.500H6.500" stroke="#4cc2f0" stroke-width="1.200"/><path d="M4.500 18.500V11.500H17.500V18.500H14.500V14.500H7.500V18.500Z" fill="#38a9e8"/></svg>
<!-- chrome -->
<svg style="left:208px;top:736px" width="24" height="24" viewBox="-12 -12 24 24"><circle r="11.200" fill="#db4437"/><path d="M0 0L-9.700 -5.600A11.200 11.200 0 0 0 -5.600 9.700L0 11.200Z" fill="#0f9d58"/><path d="M0 0L-5.600 9.700A11.200 11.200 0 0 0 11 -2L0 -2Z" fill="#ffcd40"/><path d="M0 -5H10.700A11.200 11.200 0 0 0 -9.700 -5.600L-4.500 2.600Z" fill="#db4437"/><path d="M-4.500 2.600L-9.700 -5.600A11.200 11.200 0 0 0 -2 11L3 5.200Z" fill="#0f9d58"/><circle r="5.200" fill="#fff"/><circle r="4.100" fill="#4285f4"/></svg>
<!-- word -->
<svg style="left:257px;top:736px" width="23" height="22" viewBox="0 0 23 22"><rect x="0.500" y="1.500" width="21" height="20" fill="#f4f8fd" stroke="#2a5db0" stroke-width="1"/><rect x="1" y="14" width="20" height="7" fill="#c9daf0"/><path d="M14 12L22 15L20 21L13 18Z" fill="#fff" stroke="#b8c8de" stroke-width="0.500"/></svg>
<div class="t" style="left:258px;top:738px;font:bold 17px 'Liberation Sans',sans-serif;color:#1b4fb0;letter-spacing:-1px">W</div>
<!-- mathcad -->
<svg style="left:306px;top:739px" width="25" height="21" viewBox="0 0 25 21"><defs><linearGradient id="mg2" x1="0" y1="0" x2="0" y2="1"><stop offset="0" stop-color="#8ea9bb"/><stop offset="0.300" stop-color="#466d89"/><stop offset="0.700" stop-color="#2d526c"/><stop offset="1" stop-color="#3d6784"/></linearGradient></defs><path d="M0 0H7.500L12.500 11.500L17.500 0H24V20H18.500V6.500L13.800 20H11L6.500 7V20H2V2.500L0 1Z" fill="url(#mg2)"/></svg>
<!-- tray -->
<svg style="left:1084px;top:739px" width="16" height="17" viewBox="0 0 16 17" fill="none" stroke="#fff" stroke-width="1.100"><circle cx="10.600" cy="3.500" r="2.500"/><path d="M7.300 8.200C8.600 6.400 12.800 6.300 14.300 10"/><circle cx="3.900" cy="9.500" r="2.400"/><path d="M0.500 16C1 12.200 6.800 12.200 7.400 16"/></svg>
<svg style="left:1121px;top:744px" width="13" height="8" viewBox="0 0 13 8" fill="none" stroke="#fff" stroke-width="1.200"><path d="M0.500 7L6.500 1L12.500 7"/></svg>
<svg style="left:1143px;top:742px" width="17" height="12" viewBox="0 0 17 12" fill="none" stroke="#fff" stroke-width="1.100"><path d="M5 2.500H14.500V10.500H4"/><path d="M15.500 5V8" stroke-width="1.400"/><path d="M1.500 0V2.500M4 0V2.500M0.500 2.500H5V5C5 6.500 3.800 7 2.800 7C1.700 7 0.500 6.500 0.500 5ZM2.800 7V11H4.500"/></svg>
<svg style="left:1170px;top:742px" width="14" height="14" viewBox="0 0 14 14" fill="none" stroke="#fff" stroke-width="1.200"><path d="M0.700 13A12.300 12.300 0 0 1 13 0.700"/><path d="M4.500 13A8.500 8.500 0 0 1 13 4.500" /><path d="M8.200 13A4.800 4.800 0 0 1 13 8.200"/><circle cx="11.800" cy="11.800" r="1.400" fill="#fff" stroke="none"/></svg>
<svg style="left:1191px;top:742px" width="15" height="13" viewBox="0 0 15 13" fill="none" stroke="#fff" stroke-width="1.100"><path d="M0.600 4.500H3L6.500 1V12L3 8.500H0.600Z"/><path d="M9.300 4.200L13.800 8.700M13.800 4.200L9.300 8.700"/></svg>
<div class="t ui" style="left:1216.500px;top:742px;color:#fff;letter-spacing:-0.100px">ENG</div>
<div class="t ui" style="left:1265.500px;top:733px;color:#fff">21:05</div>
<div class="t ui" style="left:1252.500px;top:751px;color:#fff;letter-spacing:-0.520px">02.03.2019</div>
<svg style="left:1325px;top:740px" width="17" height="17" viewBox="0 0 17 17" fill="none" stroke="#fff" stroke-width="1.200"><path d="M0.600 0.600H16.400V12.400H11.500L8.500 15.400L5.500 12.400H0.600Z"/></svg>
<div class="a" style="left:1361px;top:728px;width:1px;height:40px;background:#6d6d6d"></div>
</body></html>
